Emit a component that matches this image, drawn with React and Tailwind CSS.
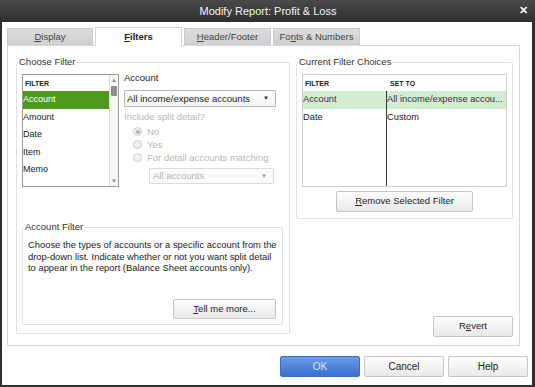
import React from "react";

const F = "font-['Liberation_Sans',Arial,sans-serif]";

function Btn({ children, className = "" }) {
  return (
    <div
      className={`flex items-center justify-center border border-[#c6c6c6] rounded-[2px] bg-gradient-to-b from-[#fdfdfd] to-[#e9e9e9] text-[9.5px] text-[#222] ${className}`}
    >
      {children}
    </div>
  );
}

function Group({ label, className = "", children }) {
  return (
    <div className={`relative border border-[#e2e2e2] rounded-[2px] ${className}`}>
      <span className="absolute left-[1px] top-[-7px] bg-white px-[1px] text-[9.5px] leading-[12px] text-[#333]">
        {label}
      </span>
      {children}
    </div>
  );
}

function Radio({ checked, children }) {
  return (
    <div className="flex items-center h-[13px] pl-[9px] text-[9.5px] text-[#b8b8b8]">
      <span className="w-[9px] h-[9px] rounded-full border border-[#cfcfcf] bg-[#f1f1f1] flex items-center justify-center">
        {checked && <span className="w-[4px] h-[4px] rounded-full bg-[#b5b5b5]" />}
      </span>
      <span className="ml-[5px] leading-[13px]">{children}</span>
    </div>
  );
}

function Tab({ active, children, className = "" }) {
  return active ? (
    <div
      className={`h-[19px] flex items-center justify-center bg-white border border-b-0 border-[#d4d4d4] text-[9.5px] font-bold text-[#222] -mb-[1px] relative z-10 ${className}`}
    >
      {children}
    </div>
  ) : (
    <div
      className={`h-[17px] flex items-center justify-center bg-gradient-to-b from-[#dcdcdc] to-[#cfcfcf] border border-b-0 border-[#c9c9c9] text-[9.5px] text-[#444] ${className}`}
    >
      {children}
    </div>
  );
}

export default function App() {
  const listRows = ["Amount", "Date", "Item", "Memo"];
  return (
    <div className={`w-[535px] h-[387px] bg-[#2f2f2f] flex flex-col pl-[2px] pr-[3px] pb-[2px] ${F}`}>
      {/* title bar */}
      <div className="h-[22px] relative flex items-center justify-center bg-gradient-to-b from-[#4a4a4a] to-[#2f2f2f] text-[#f4f4f4] text-[11px] -ml-[2px] -mr-[3px]">
        <span className="leading-[22px] pl-[1px]">Modify Report: Profit &amp; Loss</span>
        <span className="absolute right-[7px] top-[4px] text-[11px] font-bold leading-[12px]">✕</span>
      </div>

      {/* body */}
      <div className="flex-1 bg-white flex flex-col">
        {/* tabs */}
        <div className="flex items-end gap-[2px] mt-[5px] ml-[5px] h-[18px]">
          <Tab className="w-[86px]">
            <span><u className="underline-offset-1">D</u>isplay</span>
          </Tab>
          <Tab active className="w-[87px]">
            <span><u className="underline-offset-1">F</u>ilters</span>
          </Tab>
          <Tab className="w-[87px]">
            <span><u className="underline-offset-1">H</u>eader/Footer</span>
          </Tab>
          <Tab className="w-[87px]">
            <span>Fo<u className="underline-offset-1">n</u>ts &amp; Numbers</span>
          </Tab>
        </div>

        {/* panel */}
        <div className="ml-[5px] w-[513px] h-[301px] border border-[#d8d8d8] flex pt-[16px] pl-[8px]">
          {/* Choose Filter */}
          <Group label="Choose Filter" className="w-[274px] h-[272px] flex flex-col">
            <div className="h-[124px] flex items-start pt-[8px] pl-[5px]">
              {/* list */}
              <div className="mt-[3px] w-[97px] h-[113px] border border-[#9a9a9a] flex bg-white">
                <div className="flex-1 flex flex-col">
                  <div className="h-[16px] flex items-center pl-[2px] text-[7px] font-bold text-[#222] leading-none">FILTER</div>
                  <div className="h-[17.5px] flex items-center bg-[#4d9a1e] text-white text-[9px] leading-none">Account</div>
                  {listRows.map((r) => (
                    <div key={r} className="h-[17.5px] flex items-center text-[9px] text-[#222] leading-none">
                      {r}
                    </div>
                  ))}
                </div>
                {/* scrollbar */}
                <div className="w-[9px] border-l border-[#dcdcdc] bg-[#f7f7f7] flex flex-col items-center">
                  <span className="mt-[2px] text-[6px] leading-[7px] text-[#8a8a8a]">▲</span>
                  <span className="mt-[2px] w-[6px] h-[10px] rounded-[1px] bg-[#8e8e8e]" />
                  <span className="mt-auto mb-[1px] text-[6px] leading-[7px] text-[#8a8a8a]">▼</span>
                </div>
              </div>

              {/* right column */}
              <div className="ml-[5px] flex flex-col w-[152px]">
                <div className="text-[9.5px] leading-[14px] text-[#222]">Account</div>
                <div className="mt-[5px] h-[17px] w-[152px] border border-[#b4b4b4] rounded-[1px] bg-gradient-to-b from-white to-[#f4f4f4] flex items-center pl-[2px] pr-[6px] text-[9.5px] text-[#222]">
                  <span className="flex-1 leading-none">All income/expense accounts</span>
                  <span className="text-[6px] text-[#333]">▼</span>
                </div>
                <div className="mt-[3px] text-[9.5px] leading-[14px] text-[#b8b8b8]">Include split detail?</div>
                <div className="mt-[1px] flex flex-col">
                  <Radio checked>No</Radio>
                  <Radio>Yes</Radio>
                  <Radio>For detail accounts matching</Radio>
                </div>
                <div className="mt-[4px] ml-[25px] h-[16px] w-[125px] border border-[#dddddd] rounded-[1px] bg-[#fafafa] flex items-center pl-[3px] pr-[6px] text-[9.5px] text-[#b5b5b5]">
                  <span className="flex-1 leading-none">All accounts</span>
                  <span className="text-[6px] text-[#9a9a9a]">▼</span>
                </div>
              </div>
            </div>

            {/* Account Filter */}
            <Group label="Account Filter" className="mt-[40px] ml-[5px] w-[261px] h-[98px] flex flex-col">
              <div className="pt-[11px] pl-[5px] text-[9.4px] leading-[11.7px] text-[#222] whitespace-nowrap">
                <div>Choose the types of accounts or a specific account from the</div>
                <div>drop-down list. Indicate whether or not you want split detail</div>
                <div>to appear in the report (Balance Sheet accounts only).</div>
              </div>
              <Btn className="mt-auto mb-[5px] mr-[6px] self-end w-[103px] h-[20px]">
                <span><u className="underline-offset-1">T</u>ell me more...</span>
              </Btn>
            </Group>
          </Group>

          {/* right side */}
          <div className="ml-[6px] flex flex-col">
            <Group label="Current Filter Choices" className="w-[217px] h-[157px] flex flex-col">
              <div className="mt-[11px] ml-[5px] w-[205px] h-[113px] border border-[#d0d0d0] flex flex-col">
                <div className="h-[16px] flex items-center text-[7px] font-bold text-[#222] leading-none">
                  <span className="w-[84px] pl-[2px]">FILTER</span>
                  <span className="pl-[3px]">SET TO</span>
                </div>
                <div className="flex-1 flex">
                  <div className="w-[83px] flex flex-col">
                    <div className="h-[18px] flex items-center bg-[#d3ebd1] text-[9.3px] text-[#333] leading-none">Account</div>
                    <div className="h-[18px] flex items-center text-[9.3px] text-[#222] leading-none">Date</div>
                  </div>
                  <div className="w-[1px] bg-[#3a3a3a]" />
                  <div className="flex-1 flex flex-col">
                    <div className="h-[18px] flex items-center bg-[#d3ebd1] text-[9.3px] text-[#333] leading-none whitespace-nowrap overflow-hidden">
                      All income/expense accou...
                    </div>
                    <div className="h-[18px] flex items-center text-[9.3px] text-[#222] leading-none">Custom</div>
                  </div>
                </div>
              </div>
              <Btn className="mt-[4px] ml-[39px] w-[137px] h-[21px]">
                <span><u className="underline-offset-1">R</u>emove Selected Filter</span>
              </Btn>
            </Group>
            <Btn className="mt-[97px] self-end w-[80px] h-[21px]">
              <span>R<u className="underline-offset-1">e</u>vert</span>
            </Btn>
          </div>
        </div>

        {/* bottom buttons */}
        <div className="flex justify-end gap-[4px] mt-[10px] mr-[4px]">
          <div className="w-[80px] h-[21px] rounded-[2px] border border-[#3d6cc2] bg-gradient-to-b from-[#6c9de8] to-[#3c70cc] flex items-center justify-center text-[10px] text-[#dbe6f8]">
            OK
          </div>
          <Btn className="w-[80px] h-[21px] text-[10px]">Cancel</Btn>
          <Btn className="w-[80px] h-[21px] text-[10px]">Help</Btn>
        </div>
      </div>
    </div>
  );
}
